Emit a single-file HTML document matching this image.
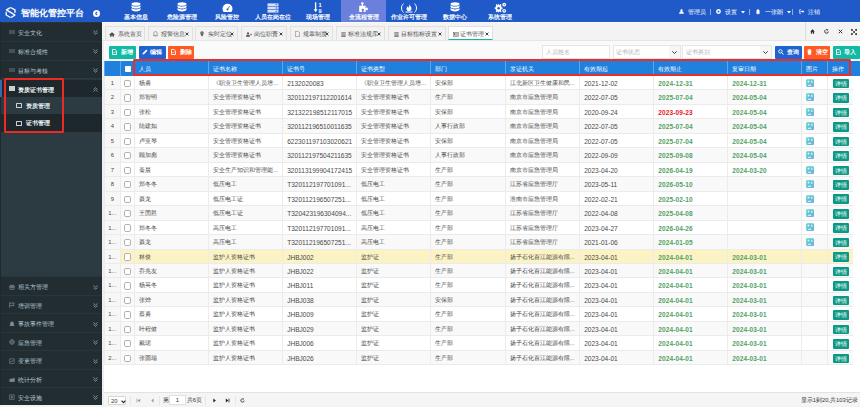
<!DOCTYPE html>
<html class="tofu"><head><meta charset="utf-8">
<style>
*{box-sizing:border-box;margin:0;padding:0}
html,body{width:860px;height:407px;overflow:hidden;background:#fff;font-family:"Liberation Sans",sans-serif;}
#hdr{position:absolute;z-index:10;left:0;top:0;width:860px;height:22px;background:#205ac8;color:#fff}
#logo{position:absolute;left:0;top:0}
#title{position:absolute;left:21px;top:7.4px;font-size:9.3px;font-weight:bold;letter-spacing:0px;line-height:12px;white-space:nowrap}
#coll{position:absolute;left:93.2px;top:10px;width:7px;height:7px;border-radius:50%;background:#fff}
.nav{position:absolute;top:0;width:45.55px;height:22px;text-align:center}
.nav.act{background:#6a80dc}
.ni{position:absolute;left:0;right:0;top:2px;height:11px;display:flex;justify-content:center;align-items:flex-end}
.nt{position:absolute;left:0;right:0;top:13.8px;font-size:5.9px;line-height:7px;white-space:nowrap;font-weight:bold}
.hr{position:absolute;top:9.3px;font-size:5.8px;line-height:7px;white-space:nowrap;color:#fff}
.hsep{position:absolute;top:8.8px;width:.8px;height:6px;background:#8fa8e6}
.car{position:absolute;top:11.3px}
#side{position:absolute;left:0;top:0;width:102px;height:407px;background:#2c3b41}
.si{position:absolute;left:0;width:102px;background:#222d32;color:#b8c7ce;font-size:5.9px;padding-left:17.7px;padding-top:1px;border-top:0.6px solid #29353a;white-space:nowrap}
.si .sic{position:absolute;left:8.6px;top:50%;margin-top:-1.9px;width:6px;height:4.4px;background:#465157}
.si .bic{position:absolute;left:9px;top:50%;margin-top:-2.5px}
.si .chev{position:absolute;left:93px;top:50%;margin-top:-1.5px}
.si.act{color:#fff;background:#1e282c;font-weight:bold}
.si.act .sic{background:#c8d0d4;width:6px;height:4.6px;margin-top:-2px}
.bar{position:absolute;left:0;top:0;width:2px;height:100%;background:#3768ad}
.ssub{position:absolute;left:0;width:102px;background:#2c3b41;color:#e8eef0;font-weight:bold;font-size:5.9px;padding-left:25.8px;padding-top:1px;white-space:nowrap}
.ssub.act{background:#1e282c;color:#fff}
.ssub .sic2{position:absolute;left:16.4px;top:50%;margin-top:-2px;width:5.2px;height:4.8px;border:.8px solid #c8d0d4;border-radius:.6px}
#redside{position:absolute;left:4.2px;top:77.8px;width:59.6px;height:55px;border:2px solid #ec2b25;border-radius:1.5px}
#tabbar{position:absolute;left:102px;top:22px;width:758px;height:19px;background:#f3f3f3;border-top:1px solid #fbfbfb;border-bottom:1px solid #e6e6e6}
.tab{position:absolute;top:26.3px;height:14px;background:#f2f2f2;border:0.5px solid #e0e0e0;border-bottom:none;font-size:5.6px;color:#555;line-height:14px;white-space:nowrap;padding-left:4.6px}
.tab.act{background:#fff;border-bottom:1px solid #1ab394}
.ti{display:inline-block;width:7.4px;vertical-align:middle;line-height:0;margin-top:-1px}
.tx{position:absolute;right:3px;top:5.1px}
#tbr{position:absolute;left:805.2px;top:22px;width:54px;height:18.6px;border-left:0.5px solid #ddd}
#main{position:absolute;left:102px;top:41px;width:758px;height:366px;background:#f9fafa;border-left:2px solid #eceeef}
#tblbg{position:absolute;left:104px;top:61px;width:756px;height:331px;background:#fff}
.btn{position:absolute;top:45.7px;height:13.2px;border-radius:1px;color:#fff;font-size:5.9px;line-height:13.2px;white-space:nowrap}
.btn .bi{position:absolute;left:3.2px;top:3.6px;line-height:0}
.btn .bt{position:absolute;left:11.8px;top:.3px;font-weight:bold}
.inp{position:absolute;top:45.4px;height:13.6px;border:1px solid #e6e6e6;background:#fff;font-size:5.8px;color:#b5b5b5;line-height:13.2px;padding-left:2.6px;white-space:nowrap}
.inp .arr{position:absolute;right:0;top:0;width:11px;height:100%;background:#f6f6f6}
#tbl{position:absolute;left:104px;top:61px;width:756px;height:304.5px}
#thead{position:absolute;left:0;top:0;width:756px;height:14.5px;background:#2080de;color:#fff}
#thead .c{font-size:5.8px;line-height:17px;color:#fff;border-left:0.5px solid rgba(255,255,255,.3)}
#tbody{position:absolute;left:0;top:15px;width:748.5px;height:289.4px;}
.row{position:absolute;left:0;width:748.5px;height:14.47px;background:#fff;border-bottom:1px solid #ebebeb}
.row.alt{background:#f9f9f9}
.row.hl{background:#fbf3c4}
.c{position:absolute;top:0;height:100%;padding-left:4.2px;font-size:5.8px;line-height:15px;color:#4a4a4a;white-space:nowrap;overflow:hidden}
.row .c{border-left:1px solid #ececec}
.row .c.num{background:#f7f7f7;color:#444;padding-left:0;text-align:center}
.c.ck{padding-left:0}
.cb{position:absolute;left:3.2px;top:3.9px;width:7.3px;height:7.3px;border:0.8px solid #b0b0b0;border-radius:1.8px;background:#fff}
.hcb{position:absolute;left:4.3px;top:4.5px;width:6.4px;height:6px;background:#fff;border-radius:.8px}
.dt{font-weight:bold;letter-spacing:.12px;font-size:6.5px;}
.lat{font-size:6.55px}
.grn{color:#52a266}
.red{color:#e8161b}
.c.ic{padding-left:0}
.pic{position:absolute;left:3.6px;top:2.9px;width:8.4px;height:8.4px}
.det{position:absolute;left:4.5px;top:2.8px;width:16.2px;height:9.6px;background:#0b9985;color:#fff;font-size:5.6px;line-height:10.8px;text-align:center;border-radius:1px}
#redbox{position:absolute;left:132.5px;top:59px;width:718.5px;height:17px;border:2px solid #ea2d27;border-radius:1.5px}
#pager{position:absolute;left:104px;top:392px;width:756px;height:13px;background:#f5f5f5;border-top:0.5px solid #e2e2e2;font-size:5.8px;color:#333}
.pg{position:absolute;top:0;line-height:13px;white-space:nowrap}
.pgsep{position:absolute;top:2.5px;width:0.5px;height:9px;background:#e6e6e6}
.pgi{position:absolute;top:4.6px}
html.tofu .z{letter-spacing:.25em;-webkit-text-stroke:.052em}
html.tofu #title .z{-webkit-text-stroke:.13em}
html.tofu .nt .z,html.tofu .bt .z{-webkit-text-stroke:.07em}
</style><script>
(function(){try{var c=document.createElement('canvas').getContext('2d');c.font='100px "Liberation Sans",sans-serif';var w=c.measureText('\u8bc1\u4e66').width;if(w>170){document.documentElement.className='';}}catch(e){}})();
</script></head><body>
<svg width="0" height="0" style="position:absolute"><defs><linearGradient id="pg" x1="0" y1="0" x2="1" y2="1"><stop offset="0" stop-color="#4fd8bd"/><stop offset="1" stop-color="#78a8ec"/></linearGradient></defs></svg>
<div id="hdr">
 <svg id="logo" width="22" height="22" viewBox="0 0 22 22"><path d="M9.9 7.9L6.4 9.9 14.7 14.9M11.1 7.7L15 9.9V12.3M6.2 12.2V15L10.1 17.2M11.4 17.2L14.8 15.3" stroke="#fff" stroke-width="1.3" fill="none" stroke-linejoin="round" stroke-linecap="round"/></svg>
 <div id="title"><span class="z">智能化管控平台</span></div>
 <div id="coll"><svg width="7" height="7" viewBox="0 0 7 7" style="position:absolute;left:0;top:0"><path d="M4.2 1.8L2.7 3.5 4.2 5.2" stroke="#205ac8" stroke-width="1.1" fill="none"/></svg></div>
 <div class="nav" style="left:113.20px"><div class="ni"><svg width="10" height="11" viewBox="0 0 10 11"><ellipse cx="5" cy="2" rx="4.5" ry="1.8" fill="#fff"/><path d="M0.5 3.2v1.6c0 1 2 1.8 4.5 1.8s4.5-.8 4.5-1.8V3.2c-.8.9-2.6 1.4-4.5 1.4S1.3 4.1.5 3.2z" fill="#fff"/><path d="M0.5 6v1.6c0 1 2 1.8 4.5 1.8s4.5-.8 4.5-1.8V6c-.8.9-2.6 1.4-4.5 1.4S1.3 6.9.5 6z" fill="#fff"/></svg></div><div class="nt"><span class="z">基本信息</span></div></div><div class="nav" style="left:158.75px"><div class="ni"><svg width="10" height="11" viewBox="0 0 10 11"><ellipse cx="5" cy="2" rx="4.5" ry="1.8" fill="#fff"/><path d="M0.5 3.2v1.6c0 1 2 1.8 4.5 1.8s4.5-.8 4.5-1.8V3.2c-.8.9-2.6 1.4-4.5 1.4S1.3 4.1.5 3.2z" fill="#fff"/><path d="M0.5 6v1.6c0 1 2 1.8 4.5 1.8s4.5-.8 4.5-1.8V6c-.8.9-2.6 1.4-4.5 1.4S1.3 6.9.5 6z" fill="#fff"/></svg></div><div class="nt"><span class="z">危险源管理</span></div></div><div class="nav" style="left:204.30px"><div class="ni"><svg width="11" height="10" viewBox="0 0 11 10"><path d="M5.5 .8A5 5 0 0 0 .5 5.8c0 1.2.4 2.3 1.1 3.2h7.8c.7-.9 1.1-2 1.1-3.2A5 5 0 0 0 5.5.8z" fill="#fff"/><circle cx="5.5" cy="6.5" r="1" fill="#205ac8"/><path d="M5.5 6.5L7.5 3" stroke="#205ac8" stroke-width=".8"/></svg></div><div class="nt"><span class="z">风险管控</span></div></div><div class="nav" style="left:249.85px"><div class="ni"><svg width="12" height="10" viewBox="0 0 12 10"><g fill="#fff" fill-opacity=".82"><rect x=".5" y=".4" width="11" height="2.7"/><rect x=".5" y="3.65" width="11" height="2.7"/><rect x=".5" y="6.9" width="11" height="2.7"/></g><g fill="#205ac8"><rect x="8.6" y="1.3" width="1.6" height=".9"/><rect x="8.6" y="4.55" width="1.6" height=".9"/><rect x="8.6" y="7.8" width="1.6" height=".9"/></g></svg></div><div class="nt"><span class="z">人员在岗在位</span></div></div><div class="nav" style="left:295.40px"><div class="ni"><svg width="10" height="11" viewBox="0 0 10 11"><path d="M2.6 .3v8.6" stroke="#fff" stroke-width="1.3"/><path d="M.7 7.3l1.9 3 1.9-3z" fill="#fff"/><text x="5.6" y="5" font-size="5.6" fill="#fff" font-family="Liberation Sans" font-weight="bold">1</text><text x="5.4" y="10.8" font-size="5.6" fill="#fff" font-family="Liberation Sans" font-weight="bold">9</text></svg></div><div class="nt"><span class="z">现场管理</span></div></div><div class="nav act" style="left:340.95px"><div class="ni"><svg width="11" height="11" viewBox="0 0 11 11"><path d="M1.2 3.8h2.6V2.6c-.5-.3-.7-.7-.7-1.1 0-.7.6-1.2 1.3-1.2s1.3.5 1.3 1.2c0 .4-.2.8-.7 1.1v1.2h2.6v2.4c.3-.4.7-.6 1.1-.6.7 0 1.2.6 1.2 1.3s-.5 1.3-1.2 1.3c-.4 0-.8-.2-1.1-.6v2.4H5.6V8.6c.3-.3.4-.6.4-.9 0-.6-.5-1-1.2-1s-1.2.4-1.2 1c0 .3.1.6.4.9v1.4H1.2z" fill="#fff"/></svg></div><div class="nt"><span class="z">全流程管理</span></div></div><div class="nav" style="left:386.50px"><div class="ni"><svg width="16" height="10" viewBox="0 0 16 10"><path d="M2.5 .5C1 2 .5 3.5.5 5s.5 3 2 4.5M13.5 .5c1.5 1.5 2 3 2 4.5s-.5 3-2 4.5" stroke="#fff" stroke-width="1" fill="none"/><path d="M8 1c.5 1.5 2.5 2.5 2.5 4.8 0 1.5-1.1 2.5-2.5 2.5S5.5 7.3 5.5 5.8C5.5 4.5 6.5 4 7 3c.5 1 .5 1.5.7 2C8.5 4 8.3 2.5 8 1z" fill="#fff"/><path d="M4.5 9h7" stroke="#fff" stroke-width="1"/></svg></div><div class="nt"><span class="z">作业许可管理</span></div></div><div class="nav" style="left:432.05px"><div class="ni"><svg width="10" height="11" viewBox="0 0 10 11"><ellipse cx="5" cy="2" rx="4.5" ry="1.8" fill="#fff"/><path d="M0.5 3.2v1.6c0 1 2 1.8 4.5 1.8s4.5-.8 4.5-1.8V3.2c-.8.9-2.6 1.4-4.5 1.4S1.3 4.1.5 3.2z" fill="#fff"/><path d="M0.5 6v1.6c0 1 2 1.8 4.5 1.8s4.5-.8 4.5-1.8V6c-.8.9-2.6 1.4-4.5 1.4S1.3 6.9.5 6z" fill="#fff"/></svg></div><div class="nt"><span class="z">数据中心</span></div></div><div class="nav" style="left:477.60px"><div class="ni"><svg width="13" height="11" viewBox="0 0 13 11"><g fill="#fff"><circle cx="4.6" cy="6.2" r="3.1"/><path d="M4 2.2h1.2l.3 1.2-1.8 0zM4 10.2h1.2l.3-1.2H3.7zM.6 5.6v1.2l1.2.3V5.3zM8.6 5.6v1.2l-1.2.3V5.3zM1.7 2.9l.9-.8 1 .8-1.2 1.3zM7.5 9.5l-.9.8-1-.8 1.2-1.3zM1.7 9.5l.9.8 1-.8-1.2-1.3zM7.5 2.9l-.9-.8-1 .8 1.2 1.3z"/><circle cx="10.2" cy="2.6" r="1.9"/><circle cx="10.2" cy="8.8" r="1.9"/></g><circle cx="4.6" cy="6.2" r="1.2" fill="#205ac8"/><circle cx="10.2" cy="2.6" r=".7" fill="#205ac8"/><circle cx="10.2" cy="8.8" r=".7" fill="#205ac8"/></svg></div><div class="nt"><span class="z">系统管理</span></div></div>
 <div class="hr" style="left:679px"><svg width="5" height="5" viewBox="0 0 5 5" style="vertical-align:0"><path d="M2.5 .2c-.7 0-1.1.6-1.1 1.2 0 .5.2.9.5 1.1C.8 2.8.1 3.6.1 4.8h4.8c0-1.2-.7-2-1.8-2.3.3-.2.5-.6.5-1.1 0-.6-.4-1.2-1.1-1.2z" fill="#fff"/></svg></div>
 <div class="hr" style="left:687.7px"><span class="z">管理员</span></div>
 <div class="hsep" style="left:709.6px"></div>
 <div class="hr" style="left:715.8px"><svg width="5" height="5" viewBox="0 0 5 5" style="vertical-align:0"><circle cx="2.5" cy="2.5" r="1.7" fill="none" stroke="#fff" stroke-width="1.4"/></svg></div>
 <div class="hr" style="left:725px"><span class="z">设置</span></div>
 <svg class="car" style="left:740.8px" width="4" height="3" viewBox="0 0 4 3"><path d="M0 0h4L2 2.4z" fill="#fff"/></svg>
 <div class="hsep" style="left:749px"></div>
 <div class="hr" style="left:756px"><svg width="4" height="6" viewBox="0 0 4 6" style="vertical-align:-1px"><path d="M2 .2C1 .2.5 1 .5 2.2v1.8L0 4.8h4l-.5-.8V2.2C3.5 1 3 .2 2 .2zM1.4 5.2h1.2l-.6.6z" fill="#fff"/></svg></div>
 <div class="hr" style="left:764.6px"><span class="z">一张朗</span></div>
 <svg class="car" style="left:786.5px" width="4" height="3" viewBox="0 0 4 3"><path d="M0 0h4L2 2.4z" fill="#fff"/></svg>
 <div class="hsep" style="left:791.8px"></div>
 <div class="hr" style="left:798.8px"><svg width="6" height="5" viewBox="0 0 6 5" style="vertical-align:0"><path d="M2 .7H.7v3.6H2" stroke="#e8eefc" stroke-width=".8" fill="none"/><path d="M1.6 1.9h1.9V.9l1.9 1.6-1.9 1.6v-1h-1.9z" fill="#e8eefc"/></svg></div>
 <div class="hr" style="left:808px"><span class="z">注销</span></div>
</div>
<div id="side"><div class="si" style="top:22.00px;height:18.70px;line-height:18.70px"><span class="sic"></span><span class="z">安全文化</span><svg class="chev" width="5" height="5" viewBox="0 0 5 5"><path d="M.5 .5L2.5 2.2 4.5 .5M.5 2.6L2.5 4.3 4.5 2.6" stroke="#8aa4af" stroke-width=".8" fill="none"/></svg></div><div class="si" style="top:40.70px;height:18.90px;line-height:18.90px"><span class="sic"></span><span class="z">标准合规性</span><svg class="chev" width="5" height="5" viewBox="0 0 5 5"><path d="M.5 .5L2.5 2.2 4.5 .5M.5 2.6L2.5 4.3 4.5 2.6" stroke="#8aa4af" stroke-width=".8" fill="none"/></svg></div><div class="si" style="top:59.60px;height:18.80px;line-height:18.80px"><span class="sic"></span><span class="z">目标与考核</span><svg class="chev" width="5" height="5" viewBox="0 0 5 5"><path d="M.5 .5L2.5 2.2 4.5 .5M.5 2.6L2.5 4.3 4.5 2.6" stroke="#8aa4af" stroke-width=".8" fill="none"/></svg></div><div class="si act" style="top:78.5px;height:18px;line-height:18px"><span class="sic card"></span><span class="z">资质证书管理</span><svg class="chev" width="5" height="5" viewBox="0 0 5 5"><path d="M.5 4.5L2.5 2.8 4.5 4.5M.5 2.4L2.5 .7 4.5 2.4" stroke="#8aa4af" stroke-width=".8" fill="none"/></svg><span class="bar"></span></div><div class="ssub" style="top:96.5px;height:17.7px;line-height:17.7px"><span class="sic2"></span><span class="z">资质管理</span></div><div class="ssub act" style="top:114.2px;height:17.8px;line-height:17.8px"><span class="sic2 card"></span><span class="z">证书管理</span></div><div class="si" style="top:276.40px;height:18.47px;line-height:18.47px"><svg class="bic" width="6" height="6" viewBox="0 0 6 6"><path d="M.5 2h5v1.2h-5zM1 3.2h4v2.6H1zM3 2v3.8M3 2C2.5.8 1.3.6 1.3 1.3S2.5 2 3 2C3.5.8 4.7.6 4.7 1.3S3.5 2 3 2" stroke="#7f8c92" stroke-width=".6" fill="none"/></svg><span class="z">相关方管理</span><svg class="chev" width="5" height="5" viewBox="0 0 5 5"><path d="M.5 .5L2.5 2.2 4.5 .5M.5 2.6L2.5 4.3 4.5 2.6" stroke="#8aa4af" stroke-width=".8" fill="none"/></svg></div><div class="si" style="top:294.87px;height:18.47px;line-height:18.47px"><svg class="bic" width="6" height="6" viewBox="0 0 6 6"><path d="M.6 5.8V.6M.6 1h4.6L4.3 2.3l.9 1.3H.6" stroke="#7f8c92" stroke-width=".7" fill="none"/></svg><span class="z">培训管理</span><svg class="chev" width="5" height="5" viewBox="0 0 5 5"><path d="M.5 .5L2.5 2.2 4.5 .5M.5 2.6L2.5 4.3 4.5 2.6" stroke="#8aa4af" stroke-width=".8" fill="none"/></svg></div><div class="si" style="top:313.34px;height:18.47px;line-height:18.47px"><svg class="bic" width="6" height="6" viewBox="0 0 6 6"><path d="M3 .5c-1.1 0-1.8.9-1.8 2v1.6L.5 5h5l-.7-.9V2.5C4.8 1.4 4.1.5 3 .5z" fill="#7f8c92"/></svg><span class="z">事故事件管理</span><svg class="chev" width="5" height="5" viewBox="0 0 5 5"><path d="M.5 .5L2.5 2.2 4.5 .5M.5 2.6L2.5 4.3 4.5 2.6" stroke="#8aa4af" stroke-width=".8" fill="none"/></svg></div><div class="si" style="top:331.81px;height:18.47px;line-height:18.47px"><svg class="bic" width="6" height="6" viewBox="0 0 6 6"><circle cx="3" cy="3" r="2.3" stroke="#7f8c92" stroke-width=".7" fill="none"/><circle cx="3" cy="3" r="1" stroke="#7f8c92" stroke-width=".6" fill="none"/><path d="M3 .7v1.3M3 4v1.3M.7 3H2M4 3h1.3" stroke="#7f8c92" stroke-width=".6"/></svg><span class="z">应急管理</span><svg class="chev" width="5" height="5" viewBox="0 0 5 5"><path d="M.5 .5L2.5 2.2 4.5 .5M.5 2.6L2.5 4.3 4.5 2.6" stroke="#8aa4af" stroke-width=".8" fill="none"/></svg></div><div class="si" style="top:350.28px;height:18.47px;line-height:18.47px"><svg class="bic" width="6" height="6" viewBox="0 0 6 6"><path d="M.6.8h4.6v4.6H.6z" stroke="#7f8c92" stroke-width=".6" fill="none"/><path d="M1.5 3l1 1 2-2.2" stroke="#7f8c92" stroke-width=".7" fill="none"/></svg><span class="z">变更管理</span><svg class="chev" width="5" height="5" viewBox="0 0 5 5"><path d="M.5 .5L2.5 2.2 4.5 .5M.5 2.6L2.5 4.3 4.5 2.6" stroke="#8aa4af" stroke-width=".8" fill="none"/></svg></div><div class="si" style="top:368.75px;height:18.47px;line-height:18.47px"><svg class="bic" width="6" height="6" viewBox="0 0 6 6"><path d="M.4 5.6h5.2M.8 5.4V3.6L2 2.6l1.2 1L4.6 1.8l.8.8v2.8z" stroke="#7f8c92" stroke-width=".5" fill="#7f8c92"/></svg><span class="z">统计分析</span><svg class="chev" width="5" height="5" viewBox="0 0 5 5"><path d="M.5 .5L2.5 2.2 4.5 .5M.5 2.6L2.5 4.3 4.5 2.6" stroke="#8aa4af" stroke-width=".8" fill="none"/></svg></div><div class="si" style="top:387.22px;height:18.47px;line-height:18.47px"><svg class="bic" width="6" height="6" viewBox="0 0 6 6"><path d="M.6.8h4.6v4.6H.6z" stroke="#7f8c92" stroke-width=".6" fill="none"/><path d="M2.9 1.6v3M1.4 3.1h3" stroke="#7f8c92" stroke-width=".7"/></svg><span class="z">安全设施</span><svg class="chev" width="5" height="5" viewBox="0 0 5 5"><path d="M.5 .5L2.5 2.2 4.5 .5M.5 2.6L2.5 4.3 4.5 2.6" stroke="#8aa4af" stroke-width=".8" fill="none"/></svg></div></div>
<div style="position:absolute;left:0;top:22px;width:1px;height:56.5px;background:#1f292d"></div><div style="position:absolute;left:0;top:96.5px;width:1px;height:308.5px;background:#1f292d"></div>
<div id="redside"></div>
<div id="tabbar"></div>
<div class="tab" style="left:104.70px;width:40.70px"><span class="ti"><svg width="6" height="5" viewBox="0 0 6 5" style="margin-left:-1px"><path d="M3 .3L.1 2.7l.4.4.6-.5v2.1h1.4V3.4h1v1.3h1.4V2.6l.6.5.4-.4z" fill="#4a4a4a"/></svg></span><span class="z">系统首页</span></div><div class="tab" style="left:147.70px;width:44.90px"><span class="ti"><svg width="5" height="6" viewBox="0 0 5 6"><path d="M2.5.5c-1 0-1.6.8-1.6 1.8v1.5L.3 4.6h4.4l-.6-.8V2.3C4.1 1.3 3.5.5 2.5.5zM2 5.1h1" stroke="#555" stroke-width=".5" fill="none"/></svg></span><span class="z">报警信息</span><svg class="tx" width="4" height="4" viewBox="0 0 4 4"><path d="M.6.6l2.8 2.8M3.4.6L.6 3.4" stroke="#444" stroke-width="1"/></svg></div><div class="tab" style="left:194.60px;width:43.40px"><span class="ti"><svg width="4" height="6" viewBox="0 0 4 6"><path d="M2 .3C1 .3.3 1 .3 2c0 1.2 1.7 3.7 1.7 3.7S3.7 3.2 3.7 2C3.7 1 3 .3 2 .3z" fill="#555"/><circle cx="2" cy="2" r=".6" fill="#f0f0f0"/></svg></span><span class="z">实时定位</span><svg class="tx" width="4" height="4" viewBox="0 0 4 4"><path d="M.6.6l2.8 2.8M3.4.6L.6 3.4" stroke="#444" stroke-width="1"/></svg></div><div class="tab" style="left:240.70px;width:46.30px"><span class="ti"><svg width="6" height="5" viewBox="0 0 6 5"><circle cx="2" cy="1.3" r="1.1" fill="#555"/><path d="M0 4.8c0-1.4.9-2.2 2-2.2s2 .8 2 2.2z" fill="#555"/><path d="M4 2.5h2M5 1.5v2" stroke="#555" stroke-width=".5"/></svg></span><span class="z">岗位职责</span><svg class="tx" width="4" height="4" viewBox="0 0 4 4"><path d="M.6.6l2.8 2.8M3.4.6L.6 3.4" stroke="#444" stroke-width="1"/></svg></div><div class="tab" style="left:289.80px;width:43.20px"><span class="ti"><svg width="5" height="6" viewBox="0 0 5 6"><path d="M.4.4h2.8l1.4 1.4v3.8H.4z" stroke="#666" stroke-width=".5" fill="none"/></svg></span><span class="z">规章制度</span><svg class="tx" width="4" height="4" viewBox="0 0 4 4"><path d="M.6.6l2.8 2.8M3.4.6L.6 3.4" stroke="#444" stroke-width="1"/></svg></div><div class="tab" style="left:335.50px;width:49.80px"><span class="ti"><svg width="5" height="5" viewBox="0 0 5 5"><path d="M.3.7h4.4M.3 2h4.4M.3 3.3h4.4M.3 4.5h4.4" stroke="#555" stroke-width=".7"/></svg></span><span class="z">标准法规库</span><svg class="tx" width="4" height="4" viewBox="0 0 4 4"><path d="M.6.6l2.8 2.8M3.4.6L.6 3.4" stroke="#444" stroke-width="1"/></svg></div><div class="tab" style="left:388.00px;width:58.00px"><span class="ti"><svg width="5" height="5" viewBox="0 0 5 5"><path d="M.3.7h4.4M.3 2h4.4M.3 3.3h4.4M.3 4.5h4.4" stroke="#555" stroke-width=".7"/></svg></span><span class="z">目标指标设置</span><svg class="tx" width="4" height="4" viewBox="0 0 4 4"><path d="M.6.6l2.8 2.8M3.4.6L.6 3.4" stroke="#444" stroke-width="1"/></svg></div><div class="tab act" style="left:447.50px;width:45.20px"><span class="ti"><svg width="6" height="5" viewBox="0 0 6 5"><rect x=".3" y=".4" width="5.4" height="4.2" stroke="#555" stroke-width=".5" fill="none"/><rect x="1" y="1.2" width="1.5" height="1.6" fill="#555"/><path d="M3 1.5h2M3 2.5h2M1 3.6h4" stroke="#555" stroke-width=".4"/></svg></span><span class="z">证书管理</span><svg class="tx" width="4" height="4" viewBox="0 0 4 4"><path d="M.6.6l2.8 2.8M3.4.6L.6 3.4" stroke="#444" stroke-width="1"/></svg></div>
<div id="tbr"></div>
<div class="hr" style="left:810px;top:29px;color:#333"><svg width="5" height="5" viewBox="0 0 5 5"><path d="M2.5 .3L.2 2.5h.7V4.7h1.2V3.3h.8v1.4h1.2V2.5h.7z" fill="#333"/></svg></div>
<div class="hr" style="left:823.5px;top:29px;color:#333"><svg width="5" height="5" viewBox="0 0 5 5"><path d="M4.3 2.5A1.8 1.8 0 1 1 3.6 1" stroke="#333" stroke-width=".9" fill="none"/><path d="M3 .2L4.3.8 3.6 2z" fill="#333"/></svg></div>
<div class="hr" style="left:837.5px;top:29px;color:#333"><svg width="5" height="5" viewBox="0 0 5 5"><path d="M.8.8l3.4 3.4M4.2.8L.8 4.2" stroke="#333" stroke-width="1"/></svg></div>
<div class="hr" style="left:850.5px;top:29px;color:#333"><svg width="6" height="6" viewBox="0 0 6 6"><path d="M1.2 1.2l3.6 3.6M4.8 1.2L1.2 4.8" stroke="#333" stroke-width=".8"/><path d="M0 0h2.2L0 2.2zM6 0H3.8L6 2.2zM0 6h2.2L0 3.8zM6 6H3.8L6 3.8z" fill="#333"/></svg></div>
<div id="main"></div>
<div class="btn" style="left:109.2px;width:27px;background:#12b9a4"><span class="bi"><svg width="5" height="6" viewBox="0 0 5 6"><path d="M.5.5h2.7l1.4 1.4v3.6H.5z" stroke="#fff" stroke-width=".9" fill="none"/><path d="M1.4 3.2l.8.8 1.4-1.5" stroke="#fff" stroke-width=".7" fill="none"/></svg></span><span class="bt"><span class="z">新增</span></span></div>
<div class="btn" style="left:138.5px;width:27px;background:#2062d2"><span class="bi"><svg width="6" height="6" viewBox="0 0 6 6"><path d="M.5 5.5L.8 4 4.3.5 5.5 1.7 2 5.2z" fill="#fff"/></svg></span><span class="bt"><span class="z">编辑</span></span></div>
<div class="btn" style="left:167.8px;width:26.5px;background:#fe5a24"><span class="bi"><svg width="5" height="6" viewBox="0 0 5 6"><path d="M.5.5h2.7l1.4 1.4v3.6H.5z" stroke="#fff" stroke-width=".9" fill="none"/><path d="M1.4 3.2l.8.8 1.4-1.5" stroke="#fff" stroke-width=".7" fill="none"/></svg></span><span class="bt"><span class="z">删除</span></span></div>
<div class="inp" style="left:542px;width:68.4px"><span class="z">人员姓名</span></div>
<div class="inp" style="left:612.5px;width:68px"><span class="z">证书状态</span><span class="arr"><svg width="11" height="13" viewBox="0 0 11 13" style="position:absolute;left:0;top:0"><path d="M3.3 5.3l2.2 2.2 2.2-2.2" stroke="#444" stroke-width="1" fill="none"/></svg></span></div>
<div class="inp" style="left:682px;width:90px"><span class="z">证书类别</span><span class="arr"><svg width="11" height="13" viewBox="0 0 11 13" style="position:absolute;left:0;top:0"><path d="M3.3 5.3l2.2 2.2 2.2-2.2" stroke="#444" stroke-width="1" fill="none"/></svg></span></div>
<div class="btn" style="left:775.2px;width:26.6px;background:#2062d2"><span class="bi"><svg width="6" height="6" viewBox="0 0 6 6"><circle cx="2.4" cy="2.4" r="1.7" stroke="#fff" stroke-width=".9" fill="none"/><path d="M3.6 3.6l1.9 1.9" stroke="#fff" stroke-width="1"/></svg></span><span class="bt"><span class="z">查询</span></span></div>
<div class="btn" style="left:804px;width:26px;background:#fe5a24"><span class="bi"><svg width="5" height="6" viewBox="0 0 5 6"><path d="M.3 1.2h4.4M1.7 1V.4h1.6V1M.9 1.6h3.2l-.3 4H1.2z" stroke="#fff" stroke-width=".5" fill="#fff"/></svg></span><span class="bt"><span class="z">清空</span></span></div>
<div class="btn" style="left:832.6px;width:27.4px;background:#12b9a4"><span class="bi"><svg width="5" height="6" viewBox="0 0 5 6"><path d="M.5.5h2.7l1.4 1.4v3.6H.5z" stroke="#fff" stroke-width=".9" fill="none"/><path d="M1.4 3.2l.8.8 1.4-1.5" stroke="#fff" stroke-width=".7" fill="none"/></svg></span><span class="bt"><span class="z">导入</span></span></div>
<div id="tblbg"></div>
<div id="tbl">
 <div id="thead"><div class="c " style="left:0.00px;width:15.50px"></div><div class="c ck" style="left:15.50px;width:14.50px"><span class="hcb"></span></div><div class="c " style="left:30.00px;width:74.00px"><span class="z">人员</span></div><div class="c " style="left:104.00px;width:74.00px"><span class="z">证书名称</span></div><div class="c " style="left:178.00px;width:74.00px"><span class="z">证书号</span></div><div class="c " style="left:252.00px;width:74.00px"><span class="z">证书类型</span></div><div class="c " style="left:326.00px;width:74.50px"><span class="z">部门</span></div><div class="c " style="left:400.50px;width:74.50px"><span class="z">发证机关</span></div><div class="c " style="left:475.00px;width:74.00px"><span class="z">有效期起</span></div><div class="c " style="left:549.00px;width:74.00px"><span class="z">有效期止</span></div><div class="c " style="left:623.00px;width:74.00px"><span class="z">复审日期</span></div><div class="c " style="left:697.00px;width:26.00px"><span class="z">图片</span></div><div class="c " style="left:723.00px;width:25.00px"><span class="z">操作</span></div></div>
 <div id="tbody"><div class="row" style="top:0.00px"><div class="c num" style="left:0.00px;width:15.50px">1</div><div class="c ck" style="left:15.50px;width:14.50px"><span class="cb"></span></div><div class="c " style="left:30.00px;width:74.00px"><span class="z">杨勇</span></div><div class="c " style="left:104.00px;width:74.00px"><span class="z">《职业卫生管理人员培</span>...</div><div class="c lat" style="left:178.00px;width:74.00px">2132020083</div><div class="c " style="left:252.00px;width:74.00px"><span class="z">《职业卫生管理人员培</span>...</div><div class="c " style="left:326.00px;width:74.50px"><span class="z">安保部</span></div><div class="c " style="left:400.50px;width:74.50px"><span class="z">江北新区卫生健康和民</span>...</div><div class="c lat" style="left:475.00px;width:74.00px">2021-12-02</div><div class="c dt grn" style="left:549.00px;width:74.00px">2024-12-31</div><div class="c dt grn" style="left:623.00px;width:74.00px">2024-12-31</div><div class="c ic" style="left:697.00px;width:26.00px"><svg class="pic" width="9" height="9" viewBox="0 0 9 9"><rect x=".2" y=".2" width="8.4" height="8.4" rx="1.3" fill="url(#pg)"/><rect x="1.8" y="1.8" width="1.7" height="1.9" fill="#fff" fill-opacity=".9"/><rect x="5.6" y="1.8" width="1.3" height="2.4" fill="#fff" fill-opacity=".8"/><path d="M1.6 7.2c.4-.9 1.3-1.2 2-.9.6-.6 1.5-.4 1.8.3.3.1.5.3.6.6z" fill="#fff" fill-opacity=".9"/></svg></div><div class="c ic" style="left:723.00px;width:25.00px"><span class="det"><span class="z">详情</span></span></div></div><div class="row alt" style="top:14.46px"><div class="c num" style="left:0.00px;width:15.50px">2</div><div class="c ck" style="left:15.50px;width:14.50px"><span class="cb"></span></div><div class="c " style="left:30.00px;width:74.00px"><span class="z">郑智明</span></div><div class="c " style="left:104.00px;width:74.00px"><span class="z">安全管理资格证书</span></div><div class="c lat" style="left:178.00px;width:74.00px">320112197112201614</div><div class="c " style="left:252.00px;width:74.00px"><span class="z">安全管理资格证书</span></div><div class="c " style="left:326.00px;width:74.50px"><span class="z">生产部</span></div><div class="c " style="left:400.50px;width:74.50px"><span class="z">南京市应急管理局</span></div><div class="c lat" style="left:475.00px;width:74.00px">2022-07-05</div><div class="c dt grn" style="left:549.00px;width:74.00px">2025-07-04</div><div class="c dt grn" style="left:623.00px;width:74.00px">2024-05-04</div><div class="c ic" style="left:697.00px;width:26.00px"><svg class="pic" width="9" height="9" viewBox="0 0 9 9"><rect x=".2" y=".2" width="8.4" height="8.4" rx="1.3" fill="url(#pg)"/><rect x="1.8" y="1.8" width="1.7" height="1.9" fill="#fff" fill-opacity=".9"/><rect x="5.6" y="1.8" width="1.3" height="2.4" fill="#fff" fill-opacity=".8"/><path d="M1.6 7.2c.4-.9 1.3-1.2 2-.9.6-.6 1.5-.4 1.8.3.3.1.5.3.6.6z" fill="#fff" fill-opacity=".9"/></svg></div><div class="c ic" style="left:723.00px;width:25.00px"><span class="det"><span class="z">详情</span></span></div></div><div class="row" style="top:28.92px"><div class="c num" style="left:0.00px;width:15.50px">3</div><div class="c ck" style="left:15.50px;width:14.50px"><span class="cb"></span></div><div class="c " style="left:30.00px;width:74.00px"><span class="z">张松</span></div><div class="c " style="left:104.00px;width:74.00px"><span class="z">安全管理资格证书</span></div><div class="c lat" style="left:178.00px;width:74.00px">321322198512117015</div><div class="c " style="left:252.00px;width:74.00px"><span class="z">安全管理资格证书</span></div><div class="c " style="left:326.00px;width:74.50px"><span class="z">安保部</span></div><div class="c " style="left:400.50px;width:74.50px"><span class="z">南京市应急管理局</span></div><div class="c lat" style="left:475.00px;width:74.00px">2020-09-24</div><div class="c dt red" style="left:549.00px;width:74.00px">2023-09-23</div><div class="c dt grn" style="left:623.00px;width:74.00px">2024-05-04</div><div class="c ic" style="left:697.00px;width:26.00px"><svg class="pic" width="9" height="9" viewBox="0 0 9 9"><rect x=".2" y=".2" width="8.4" height="8.4" rx="1.3" fill="url(#pg)"/><rect x="1.8" y="1.8" width="1.7" height="1.9" fill="#fff" fill-opacity=".9"/><rect x="5.6" y="1.8" width="1.3" height="2.4" fill="#fff" fill-opacity=".8"/><path d="M1.6 7.2c.4-.9 1.3-1.2 2-.9.6-.6 1.5-.4 1.8.3.3.1.5.3.6.6z" fill="#fff" fill-opacity=".9"/></svg></div><div class="c ic" style="left:723.00px;width:25.00px"><span class="det"><span class="z">详情</span></span></div></div><div class="row alt" style="top:43.38px"><div class="c num" style="left:0.00px;width:15.50px">4</div><div class="c ck" style="left:15.50px;width:14.50px"><span class="cb"></span></div><div class="c " style="left:30.00px;width:74.00px"><span class="z">陆建如</span></div><div class="c " style="left:104.00px;width:74.00px"><span class="z">安全管理资格证书</span></div><div class="c lat" style="left:178.00px;width:74.00px">320112196510011635</div><div class="c " style="left:252.00px;width:74.00px"><span class="z">安全管理资格证书</span></div><div class="c " style="left:326.00px;width:74.50px"><span class="z">人事行政部</span></div><div class="c " style="left:400.50px;width:74.50px"><span class="z">南京市应急管理局</span></div><div class="c lat" style="left:475.00px;width:74.00px">2022-07-05</div><div class="c dt grn" style="left:549.00px;width:74.00px">2025-07-04</div><div class="c dt grn" style="left:623.00px;width:74.00px">2024-05-04</div><div class="c ic" style="left:697.00px;width:26.00px"><svg class="pic" width="9" height="9" viewBox="0 0 9 9"><rect x=".2" y=".2" width="8.4" height="8.4" rx="1.3" fill="url(#pg)"/><rect x="1.8" y="1.8" width="1.7" height="1.9" fill="#fff" fill-opacity=".9"/><rect x="5.6" y="1.8" width="1.3" height="2.4" fill="#fff" fill-opacity=".8"/><path d="M1.6 7.2c.4-.9 1.3-1.2 2-.9.6-.6 1.5-.4 1.8.3.3.1.5.3.6.6z" fill="#fff" fill-opacity=".9"/></svg></div><div class="c ic" style="left:723.00px;width:25.00px"><span class="det"><span class="z">详情</span></span></div></div><div class="row" style="top:57.84px"><div class="c num" style="left:0.00px;width:15.50px">5</div><div class="c ck" style="left:15.50px;width:14.50px"><span class="cb"></span></div><div class="c " style="left:30.00px;width:74.00px"><span class="z">卢亚琴</span></div><div class="c " style="left:104.00px;width:74.00px"><span class="z">安全管理资格证书</span></div><div class="c lat" style="left:178.00px;width:74.00px">622301197103020621</div><div class="c " style="left:252.00px;width:74.00px"><span class="z">安全管理资格证书</span></div><div class="c " style="left:326.00px;width:74.50px"><span class="z">安保部</span></div><div class="c " style="left:400.50px;width:74.50px"><span class="z">南京市应急管理局</span></div><div class="c lat" style="left:475.00px;width:74.00px">2022-07-05</div><div class="c dt grn" style="left:549.00px;width:74.00px">2025-07-04</div><div class="c dt grn" style="left:623.00px;width:74.00px">2024-05-04</div><div class="c ic" style="left:697.00px;width:26.00px"><svg class="pic" width="9" height="9" viewBox="0 0 9 9"><rect x=".2" y=".2" width="8.4" height="8.4" rx="1.3" fill="url(#pg)"/><rect x="1.8" y="1.8" width="1.7" height="1.9" fill="#fff" fill-opacity=".9"/><rect x="5.6" y="1.8" width="1.3" height="2.4" fill="#fff" fill-opacity=".8"/><path d="M1.6 7.2c.4-.9 1.3-1.2 2-.9.6-.6 1.5-.4 1.8.3.3.1.5.3.6.6z" fill="#fff" fill-opacity=".9"/></svg></div><div class="c ic" style="left:723.00px;width:25.00px"><span class="det"><span class="z">详情</span></span></div></div><div class="row alt" style="top:72.30px"><div class="c num" style="left:0.00px;width:15.50px">6</div><div class="c ck" style="left:15.50px;width:14.50px"><span class="cb"></span></div><div class="c " style="left:30.00px;width:74.00px"><span class="z">顾加彪</span></div><div class="c " style="left:104.00px;width:74.00px"><span class="z">安全管理资格证书</span></div><div class="c lat" style="left:178.00px;width:74.00px">320112197504211635</div><div class="c " style="left:252.00px;width:74.00px"><span class="z">安全管理资格证书</span></div><div class="c " style="left:326.00px;width:74.50px"><span class="z">人事行政部</span></div><div class="c " style="left:400.50px;width:74.50px"><span class="z">南京市应急管理局</span></div><div class="c lat" style="left:475.00px;width:74.00px">2022-09-09</div><div class="c dt grn" style="left:549.00px;width:74.00px">2025-09-08</div><div class="c dt grn" style="left:623.00px;width:74.00px">2024-05-04</div><div class="c ic" style="left:697.00px;width:26.00px"><svg class="pic" width="9" height="9" viewBox="0 0 9 9"><rect x=".2" y=".2" width="8.4" height="8.4" rx="1.3" fill="url(#pg)"/><rect x="1.8" y="1.8" width="1.7" height="1.9" fill="#fff" fill-opacity=".9"/><rect x="5.6" y="1.8" width="1.3" height="2.4" fill="#fff" fill-opacity=".8"/><path d="M1.6 7.2c.4-.9 1.3-1.2 2-.9.6-.6 1.5-.4 1.8.3.3.1.5.3.6.6z" fill="#fff" fill-opacity=".9"/></svg></div><div class="c ic" style="left:723.00px;width:25.00px"><span class="det"><span class="z">详情</span></span></div></div><div class="row" style="top:86.76px"><div class="c num" style="left:0.00px;width:15.50px">7</div><div class="c ck" style="left:15.50px;width:14.50px"><span class="cb"></span></div><div class="c " style="left:30.00px;width:74.00px"><span class="z">秦晨</span></div><div class="c " style="left:104.00px;width:74.00px"><span class="z">安全生产知识和管理能</span>...</div><div class="c lat" style="left:178.00px;width:74.00px">320113199904172415</div><div class="c " style="left:252.00px;width:74.00px"><span class="z">安全管理资格证书</span></div><div class="c " style="left:326.00px;width:74.50px"><span class="z">生产部</span></div><div class="c " style="left:400.50px;width:74.50px"><span class="z">南京市应急管理局</span></div><div class="c lat" style="left:475.00px;width:74.00px">2023-04-20</div><div class="c dt grn" style="left:549.00px;width:74.00px">2026-04-19</div><div class="c dt grn" style="left:623.00px;width:74.00px">2024-03-20</div><div class="c ic" style="left:697.00px;width:26.00px"><svg class="pic" width="9" height="9" viewBox="0 0 9 9"><rect x=".2" y=".2" width="8.4" height="8.4" rx="1.3" fill="url(#pg)"/><rect x="1.8" y="1.8" width="1.7" height="1.9" fill="#fff" fill-opacity=".9"/><rect x="5.6" y="1.8" width="1.3" height="2.4" fill="#fff" fill-opacity=".8"/><path d="M1.6 7.2c.4-.9 1.3-1.2 2-.9.6-.6 1.5-.4 1.8.3.3.1.5.3.6.6z" fill="#fff" fill-opacity=".9"/></svg></div><div class="c ic" style="left:723.00px;width:25.00px"><span class="det"><span class="z">详情</span></span></div></div><div class="row alt" style="top:101.22px"><div class="c num" style="left:0.00px;width:15.50px">8</div><div class="c ck" style="left:15.50px;width:14.50px"><span class="cb"></span></div><div class="c " style="left:30.00px;width:74.00px"><span class="z">郑冬冬</span></div><div class="c " style="left:104.00px;width:74.00px"><span class="z">低压电工</span></div><div class="c lat" style="left:178.00px;width:74.00px">T320112197701091...</div><div class="c " style="left:252.00px;width:74.00px"><span class="z">低压电工</span></div><div class="c " style="left:326.00px;width:74.50px"><span class="z">生产部</span></div><div class="c " style="left:400.50px;width:74.50px"><span class="z">江苏省应急管理厅</span></div><div class="c lat" style="left:475.00px;width:74.00px">2023-05-11</div><div class="c dt grn" style="left:549.00px;width:74.00px">2026-05-10</div><div class="c dt grn" style="left:623.00px;width:74.00px"></div><div class="c ic" style="left:697.00px;width:26.00px"><svg class="pic" width="9" height="9" viewBox="0 0 9 9"><rect x=".2" y=".2" width="8.4" height="8.4" rx="1.3" fill="url(#pg)"/><rect x="1.8" y="1.8" width="1.7" height="1.9" fill="#fff" fill-opacity=".9"/><rect x="5.6" y="1.8" width="1.3" height="2.4" fill="#fff" fill-opacity=".8"/><path d="M1.6 7.2c.4-.9 1.3-1.2 2-.9.6-.6 1.5-.4 1.8.3.3.1.5.3.6.6z" fill="#fff" fill-opacity=".9"/></svg></div><div class="c ic" style="left:723.00px;width:25.00px"><span class="det"><span class="z">详情</span></span></div></div><div class="row" style="top:115.68px"><div class="c num" style="left:0.00px;width:15.50px">9</div><div class="c ck" style="left:15.50px;width:14.50px"><span class="cb"></span></div><div class="c " style="left:30.00px;width:74.00px"><span class="z">聂龙</span></div><div class="c " style="left:104.00px;width:74.00px"><span class="z">低压电工证</span></div><div class="c lat" style="left:178.00px;width:74.00px">T320112196507251...</div><div class="c " style="left:252.00px;width:74.00px"><span class="z">低压电工</span></div><div class="c " style="left:326.00px;width:74.50px"><span class="z">生产部</span></div><div class="c " style="left:400.50px;width:74.50px"><span class="z">淮南市应急管理局</span></div><div class="c lat" style="left:475.00px;width:74.00px">2022-02-21</div><div class="c dt grn" style="left:549.00px;width:74.00px">2025-02-10</div><div class="c dt grn" style="left:623.00px;width:74.00px"></div><div class="c ic" style="left:697.00px;width:26.00px"><svg class="pic" width="9" height="9" viewBox="0 0 9 9"><rect x=".2" y=".2" width="8.4" height="8.4" rx="1.3" fill="url(#pg)"/><rect x="1.8" y="1.8" width="1.7" height="1.9" fill="#fff" fill-opacity=".9"/><rect x="5.6" y="1.8" width="1.3" height="2.4" fill="#fff" fill-opacity=".8"/><path d="M1.6 7.2c.4-.9 1.3-1.2 2-.9.6-.6 1.5-.4 1.8.3.3.1.5.3.6.6z" fill="#fff" fill-opacity=".9"/></svg></div><div class="c ic" style="left:723.00px;width:25.00px"><span class="det"><span class="z">详情</span></span></div></div><div class="row alt" style="top:130.14px"><div class="c num" style="left:0.00px;width:15.50px">1...</div><div class="c ck" style="left:15.50px;width:14.50px"><span class="cb"></span></div><div class="c " style="left:30.00px;width:74.00px"><span class="z">王国胜</span></div><div class="c " style="left:104.00px;width:74.00px"><span class="z">低压电工证</span></div><div class="c lat" style="left:178.00px;width:74.00px">T320423196304094...</div><div class="c " style="left:252.00px;width:74.00px"><span class="z">低压电工</span></div><div class="c " style="left:326.00px;width:74.50px"><span class="z">生产部</span></div><div class="c " style="left:400.50px;width:74.50px"><span class="z">江苏省应急管理厅</span></div><div class="c lat" style="left:475.00px;width:74.00px">2022-04-08</div><div class="c dt grn" style="left:549.00px;width:74.00px">2025-04-08</div><div class="c dt grn" style="left:623.00px;width:74.00px"></div><div class="c ic" style="left:697.00px;width:26.00px"><svg class="pic" width="9" height="9" viewBox="0 0 9 9"><rect x=".2" y=".2" width="8.4" height="8.4" rx="1.3" fill="url(#pg)"/><rect x="1.8" y="1.8" width="1.7" height="1.9" fill="#fff" fill-opacity=".9"/><rect x="5.6" y="1.8" width="1.3" height="2.4" fill="#fff" fill-opacity=".8"/><path d="M1.6 7.2c.4-.9 1.3-1.2 2-.9.6-.6 1.5-.4 1.8.3.3.1.5.3.6.6z" fill="#fff" fill-opacity=".9"/></svg></div><div class="c ic" style="left:723.00px;width:25.00px"><span class="det"><span class="z">详情</span></span></div></div><div class="row" style="top:144.60px"><div class="c num" style="left:0.00px;width:15.50px">1...</div><div class="c ck" style="left:15.50px;width:14.50px"><span class="cb"></span></div><div class="c " style="left:30.00px;width:74.00px"><span class="z">郑冬冬</span></div><div class="c " style="left:104.00px;width:74.00px"><span class="z">高压电工</span></div><div class="c lat" style="left:178.00px;width:74.00px">T320112197701091...</div><div class="c " style="left:252.00px;width:74.00px"><span class="z">高压电工</span></div><div class="c " style="left:326.00px;width:74.50px"><span class="z">生产部</span></div><div class="c " style="left:400.50px;width:74.50px"><span class="z">江苏省应急管理厅</span></div><div class="c lat" style="left:475.00px;width:74.00px">2023-04-27</div><div class="c dt grn" style="left:549.00px;width:74.00px">2026-04-26</div><div class="c dt grn" style="left:623.00px;width:74.00px"></div><div class="c ic" style="left:697.00px;width:26.00px"><svg class="pic" width="9" height="9" viewBox="0 0 9 9"><rect x=".2" y=".2" width="8.4" height="8.4" rx="1.3" fill="url(#pg)"/><rect x="1.8" y="1.8" width="1.7" height="1.9" fill="#fff" fill-opacity=".9"/><rect x="5.6" y="1.8" width="1.3" height="2.4" fill="#fff" fill-opacity=".8"/><path d="M1.6 7.2c.4-.9 1.3-1.2 2-.9.6-.6 1.5-.4 1.8.3.3.1.5.3.6.6z" fill="#fff" fill-opacity=".9"/></svg></div><div class="c ic" style="left:723.00px;width:25.00px"><span class="det"><span class="z">详情</span></span></div></div><div class="row alt" style="top:159.06px"><div class="c num" style="left:0.00px;width:15.50px">1...</div><div class="c ck" style="left:15.50px;width:14.50px"><span class="cb"></span></div><div class="c " style="left:30.00px;width:74.00px"><span class="z">聂龙</span></div><div class="c " style="left:104.00px;width:74.00px"><span class="z">高压电工</span></div><div class="c lat" style="left:178.00px;width:74.00px">T320112196507251...</div><div class="c " style="left:252.00px;width:74.00px"><span class="z">高压电工</span></div><div class="c " style="left:326.00px;width:74.50px"><span class="z">生产部</span></div><div class="c " style="left:400.50px;width:74.50px"><span class="z">江苏省应急管理厅</span></div><div class="c lat" style="left:475.00px;width:74.00px">2021-01-06</div><div class="c dt grn" style="left:549.00px;width:74.00px">2024-01-05</div><div class="c dt grn" style="left:623.00px;width:74.00px"></div><div class="c ic" style="left:697.00px;width:26.00px"><svg class="pic" width="9" height="9" viewBox="0 0 9 9"><rect x=".2" y=".2" width="8.4" height="8.4" rx="1.3" fill="url(#pg)"/><rect x="1.8" y="1.8" width="1.7" height="1.9" fill="#fff" fill-opacity=".9"/><rect x="5.6" y="1.8" width="1.3" height="2.4" fill="#fff" fill-opacity=".8"/><path d="M1.6 7.2c.4-.9 1.3-1.2 2-.9.6-.6 1.5-.4 1.8.3.3.1.5.3.6.6z" fill="#fff" fill-opacity=".9"/></svg></div><div class="c ic" style="left:723.00px;width:25.00px"><span class="det"><span class="z">详情</span></span></div></div><div class="row hl" style="top:173.52px"><div class="c num" style="left:0.00px;width:15.50px">1...</div><div class="c ck" style="left:15.50px;width:14.50px"><span class="cb"></span></div><div class="c " style="left:30.00px;width:74.00px"><span class="z">林俊</span></div><div class="c " style="left:104.00px;width:74.00px"><span class="z">监护人资格证书</span></div><div class="c lat" style="left:178.00px;width:74.00px">JHBJ002</div><div class="c " style="left:252.00px;width:74.00px"><span class="z">监护证</span></div><div class="c " style="left:326.00px;width:74.50px"><span class="z">生产部</span></div><div class="c " style="left:400.50px;width:74.50px"><span class="z">扬子石化百江能源有限</span>...</div><div class="c lat" style="left:475.00px;width:74.00px">2023-04-01</div><div class="c dt grn" style="left:549.00px;width:74.00px">2024-04-01</div><div class="c dt grn" style="left:623.00px;width:74.00px">2024-03-01</div><div class="c ic" style="left:697.00px;width:26.00px"></div><div class="c ic" style="left:723.00px;width:25.00px"><span class="det"><span class="z">详情</span></span></div></div><div class="row alt" style="top:187.98px"><div class="c num" style="left:0.00px;width:15.50px">1...</div><div class="c ck" style="left:15.50px;width:14.50px"><span class="cb"></span></div><div class="c " style="left:30.00px;width:74.00px"><span class="z">乔兆友</span></div><div class="c " style="left:104.00px;width:74.00px"><span class="z">监护人资格证书</span></div><div class="c lat" style="left:178.00px;width:74.00px">JHBJ022</div><div class="c " style="left:252.00px;width:74.00px"><span class="z">监护证</span></div><div class="c " style="left:326.00px;width:74.50px"><span class="z">生产部</span></div><div class="c " style="left:400.50px;width:74.50px"><span class="z">扬子石化百江能源有限</span>...</div><div class="c lat" style="left:475.00px;width:74.00px">2023-04-01</div><div class="c dt grn" style="left:549.00px;width:74.00px">2024-04-01</div><div class="c dt grn" style="left:623.00px;width:74.00px">2024-03-01</div><div class="c ic" style="left:697.00px;width:26.00px"></div><div class="c ic" style="left:723.00px;width:25.00px"><span class="det"><span class="z">详情</span></span></div></div><div class="row" style="top:202.44px"><div class="c num" style="left:0.00px;width:15.50px">1...</div><div class="c ck" style="left:15.50px;width:14.50px"><span class="cb"></span></div><div class="c " style="left:30.00px;width:74.00px"><span class="z">杨英冬</span></div><div class="c " style="left:104.00px;width:74.00px"><span class="z">监护人资格证书</span></div><div class="c lat" style="left:178.00px;width:74.00px">JHBJ011</div><div class="c " style="left:252.00px;width:74.00px"><span class="z">监护证</span></div><div class="c " style="left:326.00px;width:74.50px"><span class="z">生产部</span></div><div class="c " style="left:400.50px;width:74.50px"><span class="z">扬子石化百江能源有限</span>...</div><div class="c lat" style="left:475.00px;width:74.00px">2023-04-01</div><div class="c dt grn" style="left:549.00px;width:74.00px">2024-04-01</div><div class="c dt grn" style="left:623.00px;width:74.00px">2024-03-01</div><div class="c ic" style="left:697.00px;width:26.00px"></div><div class="c ic" style="left:723.00px;width:25.00px"><span class="det"><span class="z">详情</span></span></div></div><div class="row alt" style="top:216.90px"><div class="c num" style="left:0.00px;width:15.50px">1...</div><div class="c ck" style="left:15.50px;width:14.50px"><span class="cb"></span></div><div class="c " style="left:30.00px;width:74.00px"><span class="z">张烨</span></div><div class="c " style="left:104.00px;width:74.00px"><span class="z">监护人资格证书</span></div><div class="c lat" style="left:178.00px;width:74.00px">JHBJ038</div><div class="c " style="left:252.00px;width:74.00px"><span class="z">监护证</span></div><div class="c " style="left:326.00px;width:74.50px"><span class="z">安保部</span></div><div class="c " style="left:400.50px;width:74.50px"><span class="z">扬子石化百江能源有限</span>...</div><div class="c lat" style="left:475.00px;width:74.00px">2023-04-01</div><div class="c dt grn" style="left:549.00px;width:74.00px">2024-04-01</div><div class="c dt grn" style="left:623.00px;width:74.00px">2024-03-01</div><div class="c ic" style="left:697.00px;width:26.00px"></div><div class="c ic" style="left:723.00px;width:25.00px"><span class="det"><span class="z">详情</span></span></div></div><div class="row" style="top:231.36px"><div class="c num" style="left:0.00px;width:15.50px">1...</div><div class="c ck" style="left:15.50px;width:14.50px"><span class="cb"></span></div><div class="c " style="left:30.00px;width:74.00px"><span class="z">蔡勇</span></div><div class="c " style="left:104.00px;width:74.00px"><span class="z">监护人资格证书</span></div><div class="c lat" style="left:178.00px;width:74.00px">JHBJ009</div><div class="c " style="left:252.00px;width:74.00px"><span class="z">监护证</span></div><div class="c " style="left:326.00px;width:74.50px"><span class="z">生产部</span></div><div class="c " style="left:400.50px;width:74.50px"><span class="z">扬子石化百江能源有限</span>...</div><div class="c lat" style="left:475.00px;width:74.00px">2023-04-01</div><div class="c dt grn" style="left:549.00px;width:74.00px">2024-04-01</div><div class="c dt grn" style="left:623.00px;width:74.00px">2024-03-01</div><div class="c ic" style="left:697.00px;width:26.00px"></div><div class="c ic" style="left:723.00px;width:25.00px"><span class="det"><span class="z">详情</span></span></div></div><div class="row alt" style="top:245.82px"><div class="c num" style="left:0.00px;width:15.50px">1...</div><div class="c ck" style="left:15.50px;width:14.50px"><span class="cb"></span></div><div class="c " style="left:30.00px;width:74.00px"><span class="z">叶程健</span></div><div class="c " style="left:104.00px;width:74.00px"><span class="z">监护人资格证书</span></div><div class="c lat" style="left:178.00px;width:74.00px">JHBJ029</div><div class="c " style="left:252.00px;width:74.00px"><span class="z">监护证</span></div><div class="c " style="left:326.00px;width:74.50px"><span class="z">生产部</span></div><div class="c " style="left:400.50px;width:74.50px"><span class="z">扬子石化百江能源有限</span>...</div><div class="c lat" style="left:475.00px;width:74.00px">2023-04-01</div><div class="c dt grn" style="left:549.00px;width:74.00px">2024-04-01</div><div class="c dt grn" style="left:623.00px;width:74.00px">2024-03-01</div><div class="c ic" style="left:697.00px;width:26.00px"></div><div class="c ic" style="left:723.00px;width:25.00px"><span class="det"><span class="z">详情</span></span></div></div><div class="row" style="top:260.28px"><div class="c num" style="left:0.00px;width:15.50px">1...</div><div class="c ck" style="left:15.50px;width:14.50px"><span class="cb"></span></div><div class="c " style="left:30.00px;width:74.00px"><span class="z">戴珺</span></div><div class="c " style="left:104.00px;width:74.00px"><span class="z">监护人资格证书</span></div><div class="c lat" style="left:178.00px;width:74.00px">JHBJ006</div><div class="c " style="left:252.00px;width:74.00px"><span class="z">监护证</span></div><div class="c " style="left:326.00px;width:74.50px"><span class="z">生产部</span></div><div class="c " style="left:400.50px;width:74.50px"><span class="z">扬子石化百江能源有限</span>...</div><div class="c lat" style="left:475.00px;width:74.00px">2023-04-01</div><div class="c dt grn" style="left:549.00px;width:74.00px">2024-04-01</div><div class="c dt grn" style="left:623.00px;width:74.00px">2024-03-01</div><div class="c ic" style="left:697.00px;width:26.00px"></div><div class="c ic" style="left:723.00px;width:25.00px"><span class="det"><span class="z">详情</span></span></div></div><div class="row alt" style="top:274.74px"><div class="c num" style="left:0.00px;width:15.50px">2...</div><div class="c ck" style="left:15.50px;width:14.50px"><span class="cb"></span></div><div class="c " style="left:30.00px;width:74.00px"><span class="z">张圆瑞</span></div><div class="c " style="left:104.00px;width:74.00px"><span class="z">监护人资格证书</span></div><div class="c lat" style="left:178.00px;width:74.00px">JHBJ026</div><div class="c " style="left:252.00px;width:74.00px"><span class="z">监护证</span></div><div class="c " style="left:326.00px;width:74.50px"><span class="z">生产部</span></div><div class="c " style="left:400.50px;width:74.50px"><span class="z">扬子石化百江能源有限</span>...</div><div class="c lat" style="left:475.00px;width:74.00px">2023-04-01</div><div class="c dt grn" style="left:549.00px;width:74.00px">2024-04-01</div><div class="c dt grn" style="left:623.00px;width:74.00px">2024-03-01</div><div class="c ic" style="left:697.00px;width:26.00px"></div><div class="c ic" style="left:723.00px;width:25.00px"><span class="det"><span class="z">详情</span></span></div></div></div>
</div>
<div id="redbox"></div>
<div id="pager">
 <div class="pg" style="left:3.8px;top:2.6px;width:18.4px;height:9.4px;border:0.5px solid #d5d5d5;background:#fff;line-height:9px;padding-left:2.2px;border-radius:1px">20<svg width="5" height="4" viewBox="0 0 5 4" style="position:absolute;left:12.2px;top:3px"><path d="M.6.7l1.9 1.9L4.4.7" stroke="#222" stroke-width="1.1" fill="none"/></svg></div>
 <div class="pgsep" style="left:25.8px"></div>
 <svg class="pgi" style="left:32px" width="5" height="5" viewBox="0 0 5 5"><path d="M1 .6v3.8" stroke="#999" stroke-width=".7"/><path d="M4.2.7L1.6 2.5l2.6 1.8z" fill="#999"/></svg>
 <svg class="pgi" style="left:45.5px" width="5" height="5" viewBox="0 0 5 5"><path d="M3.6.6L1.3 2.5l2.3 1.9z" fill="#999"/></svg>
 <div class="pgsep" style="left:55px"></div>
 <div class="pg" style="left:58.6px;top:.5px"><span class="z">第</span></div>
 <div class="pg" style="left:65.2px;top:2.4px;width:16.4px;height:9.6px;border:0.5px solid #e0e0e0;background:#fff;line-height:9.4px;text-align:center">1</div>
 <div class="pg" style="left:82.8px;top:.5px"><span class="z">共</span>6<span class="z">页</span></div>
 <div class="pgsep" style="left:101px"></div>
 <svg class="pgi" style="left:107.6px" width="5" height="5" viewBox="0 0 5 5"><path d="M1.3.5l2.6 2-2.6 2z" fill="#222"/></svg>
 <svg class="pgi" style="left:120.6px" width="5" height="5" viewBox="0 0 5 5"><path d="M.8.6l2.5 1.9-2.5 1.9z" fill="#222"/><path d="M4 .6v3.8" stroke="#222" stroke-width=".8"/></svg>
 <div class="pgsep" style="left:131px"></div>
 <svg class="pgi" style="left:135.8px" width="5" height="5" viewBox="0 0 5 5"><path d="M4.1 2.6A1.65 1.65 0 1 1 3.3 1.1" stroke="#333" stroke-width=".8" fill="none"/><path d="M2.6.2l1.4.5-.8 1.1z" fill="#333"/></svg>
 <div class="pg" style="right:2.3px;top:.5px"><span class="z">显示</span>1<span class="z">到</span>20,<span class="z">共</span>103<span class="z">记录</span></div>
</div>
<div style="position:absolute;left:0;top:405px;width:860px;height:2px;background:#f3f3f3;z-index:20"></div>
</body></html>
